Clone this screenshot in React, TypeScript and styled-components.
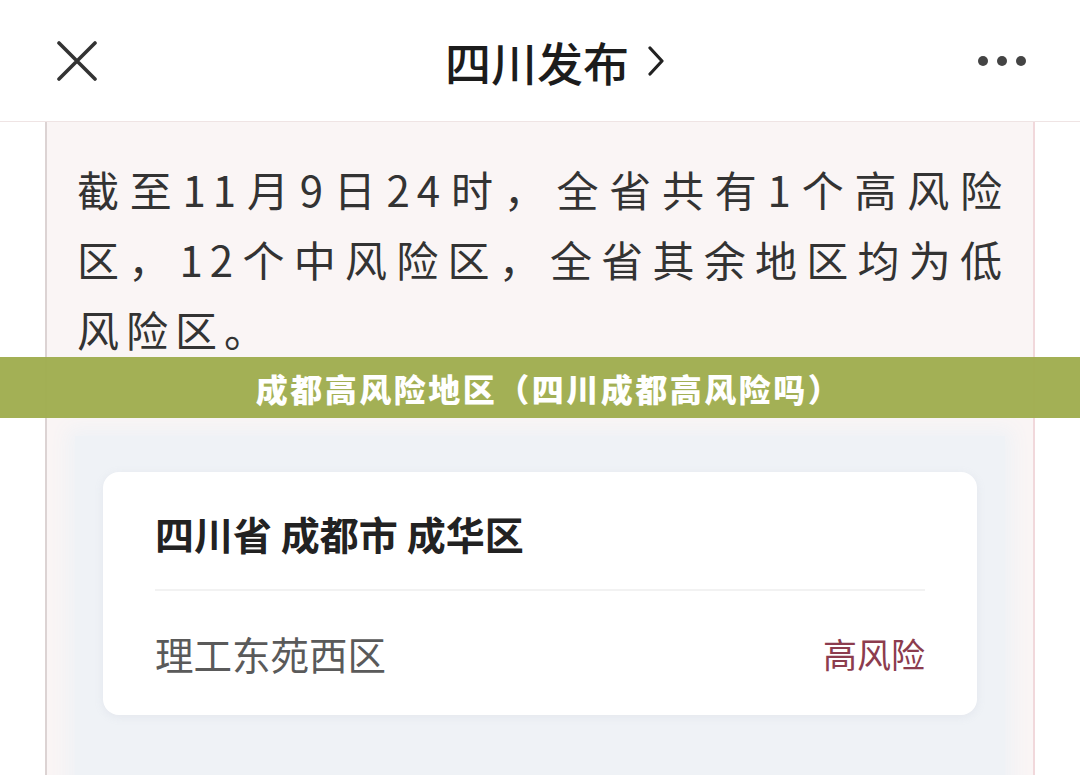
import styled, { createGlobalStyle } from 'styled-components';

const GlobalStyle = createGlobalStyle`
  html, body {
    margin: 0;
    padding: 0;
    background: #ffffff;
  }
  body {
    font-family: "Noto Sans CJK SC", "Noto Sans", sans-serif;
    color: #333;
  }
`;

const Page = styled.div`
  position: relative;
  width: 1080px;
  height: 775px;
  overflow: hidden;
  background: #ffffff;
`;

const TopBar = styled.header`
  height: 122px;
  display: grid;
  grid-template-columns: 1fr auto 1fr;
  align-items: center;
  border-bottom: 1px solid #efe4e4;
  box-sizing: border-box;
`;

const IconButton = styled.button<{ align?: 'left' | 'right' }>`
  justify-self: ${p => (p.align === 'right' ? 'end' : 'start')};
  margin: ${p => (p.align === 'right' ? '0 54px 0 0' : '0 0 0 57px')};
  padding: 0;
  border: none;
  background: none;
  display: flex;
  align-items: center;
  color: #333;
`;

const Title = styled.div`
  display: flex;
  align-items: center;
  gap: 18px;
  margin-left: 30px;
  font-size: 46px;
  font-weight: 500;
  color: #1c1c1c;
`;

const Panel = styled.main`
  margin-left: 45px;
  width: 990px;
  height: 660px;
  box-sizing: border-box;
  background: #faf5f5;
  border-left: 2px solid #dcd3d3;
  border-right: 2px solid #f1d8db;
  padding-top: 32px;
`;

const Notice = styled.div`
  padding: 0 24px 0 30px;
  font-size: 42px;
  line-height: 70px;
  letter-spacing: 7px;
  color: #333;
`;

const NoticeLine = styled.div<{ last?: boolean }>`
  text-align: ${p => (p.last ? 'left' : 'justify')};
  text-align-last: ${p => (p.last ? 'left' : 'justify')};
  white-space: nowrap;
`;

const Banner = styled.div`
  position: absolute;
  left: 0;
  right: 0;
  top: 357px;
  height: 61px;
  display: flex;
  align-items: center;
  justify-content: center;
  padding-left: 18px;
  background: rgba(160, 173, 80, 0.97);
  color: #ffffff;
  font-size: 32px;
  font-weight: 900;
  letter-spacing: 2.5px;
`;

const Result = styled.section`
  margin: 72px 28px 0 28px;
  padding: 36px 28px 80px;
  background: #eff2f6;
  box-shadow: 0 0 18px 8px #eff2f6;
`;

const Card = styled.div`
  background: #ffffff;
  border-radius: 16px;
  padding: 0 52px;
  box-shadow: 0 2px 10px rgba(150, 160, 180, 0.12);
`;

const CardTitle = styled.div`
  height: 119px;
  display: flex;
  align-items: center;
  padding-top: 4px;
  box-sizing: border-box;
  font-size: 39px;
  font-weight: 700;
  color: #222;
  border-bottom: 2px solid #f2f2f2;
`;

const AreaRow = styled.div`
  height: 124px;
  display: flex;
  align-items: center;
  justify-content: space-between;
`;

const AreaName = styled.span`
  font-size: 38.5px;
  color: #5a5a5a;
`;

const RiskTag = styled.span<{ level: 'high' | 'mid' }>`
  font-size: 34px;
  color: ${p => (p.level === 'high' ? '#8c3c4e' : '#c07a2a')};
`;

const CloseIcon = () => (
  <svg width="40" height="40" viewBox="0 0 40 40">
    <path d="M2 2 L38 38 M38 2 L2 38" stroke="#333" strokeWidth="3.6" strokeLinecap="round" />
  </svg>
);

const Chevron = () => (
  <svg width="18" height="30" viewBox="0 0 18 30">
    <path d="M3 2 L15 15 L3 28" stroke="#222" strokeWidth="3.2" fill="none" strokeLinecap="round" strokeLinejoin="round" />
  </svg>
);

const MoreIcon = () => (
  <svg width="48" height="12" viewBox="0 0 48 12">
    <circle cx="5" cy="6" r="5" fill="#444" />
    <circle cx="24" cy="6" r="5" fill="#444" />
    <circle cx="43" cy="6" r="5" fill="#444" />
  </svg>
);

const noticeLines = [
  '截至11月9日24时，全省共有1个高风险',
  '区，12个中风险区，全省其余地区均为低',
  '风险区。',
];

export default function App() {
  return (
    <>
      <GlobalStyle />
      <Page>
        <TopBar>
          <IconButton align="left">
            <CloseIcon />
          </IconButton>
          <Title>
            四川发布
            <Chevron />
          </Title>
          <IconButton align="right">
            <MoreIcon />
          </IconButton>
        </TopBar>

        <Panel>
          <Notice>
            {noticeLines.map((line, i) => (
              <NoticeLine key={i} last={i === noticeLines.length - 1}>
                {line}
              </NoticeLine>
            ))}
          </Notice>

          <Result>
            <Card>
              <CardTitle>四川省 成都市 成华区</CardTitle>
              <AreaRow>
                <AreaName>理工东苑西区</AreaName>
                <RiskTag level="high">高风险</RiskTag>
              </AreaRow>
            </Card>
          </Result>
        </Panel>

        <Banner>成都高风险地区（四川成都高风险吗）</Banner>
      </Page>
    </>
  );
}
